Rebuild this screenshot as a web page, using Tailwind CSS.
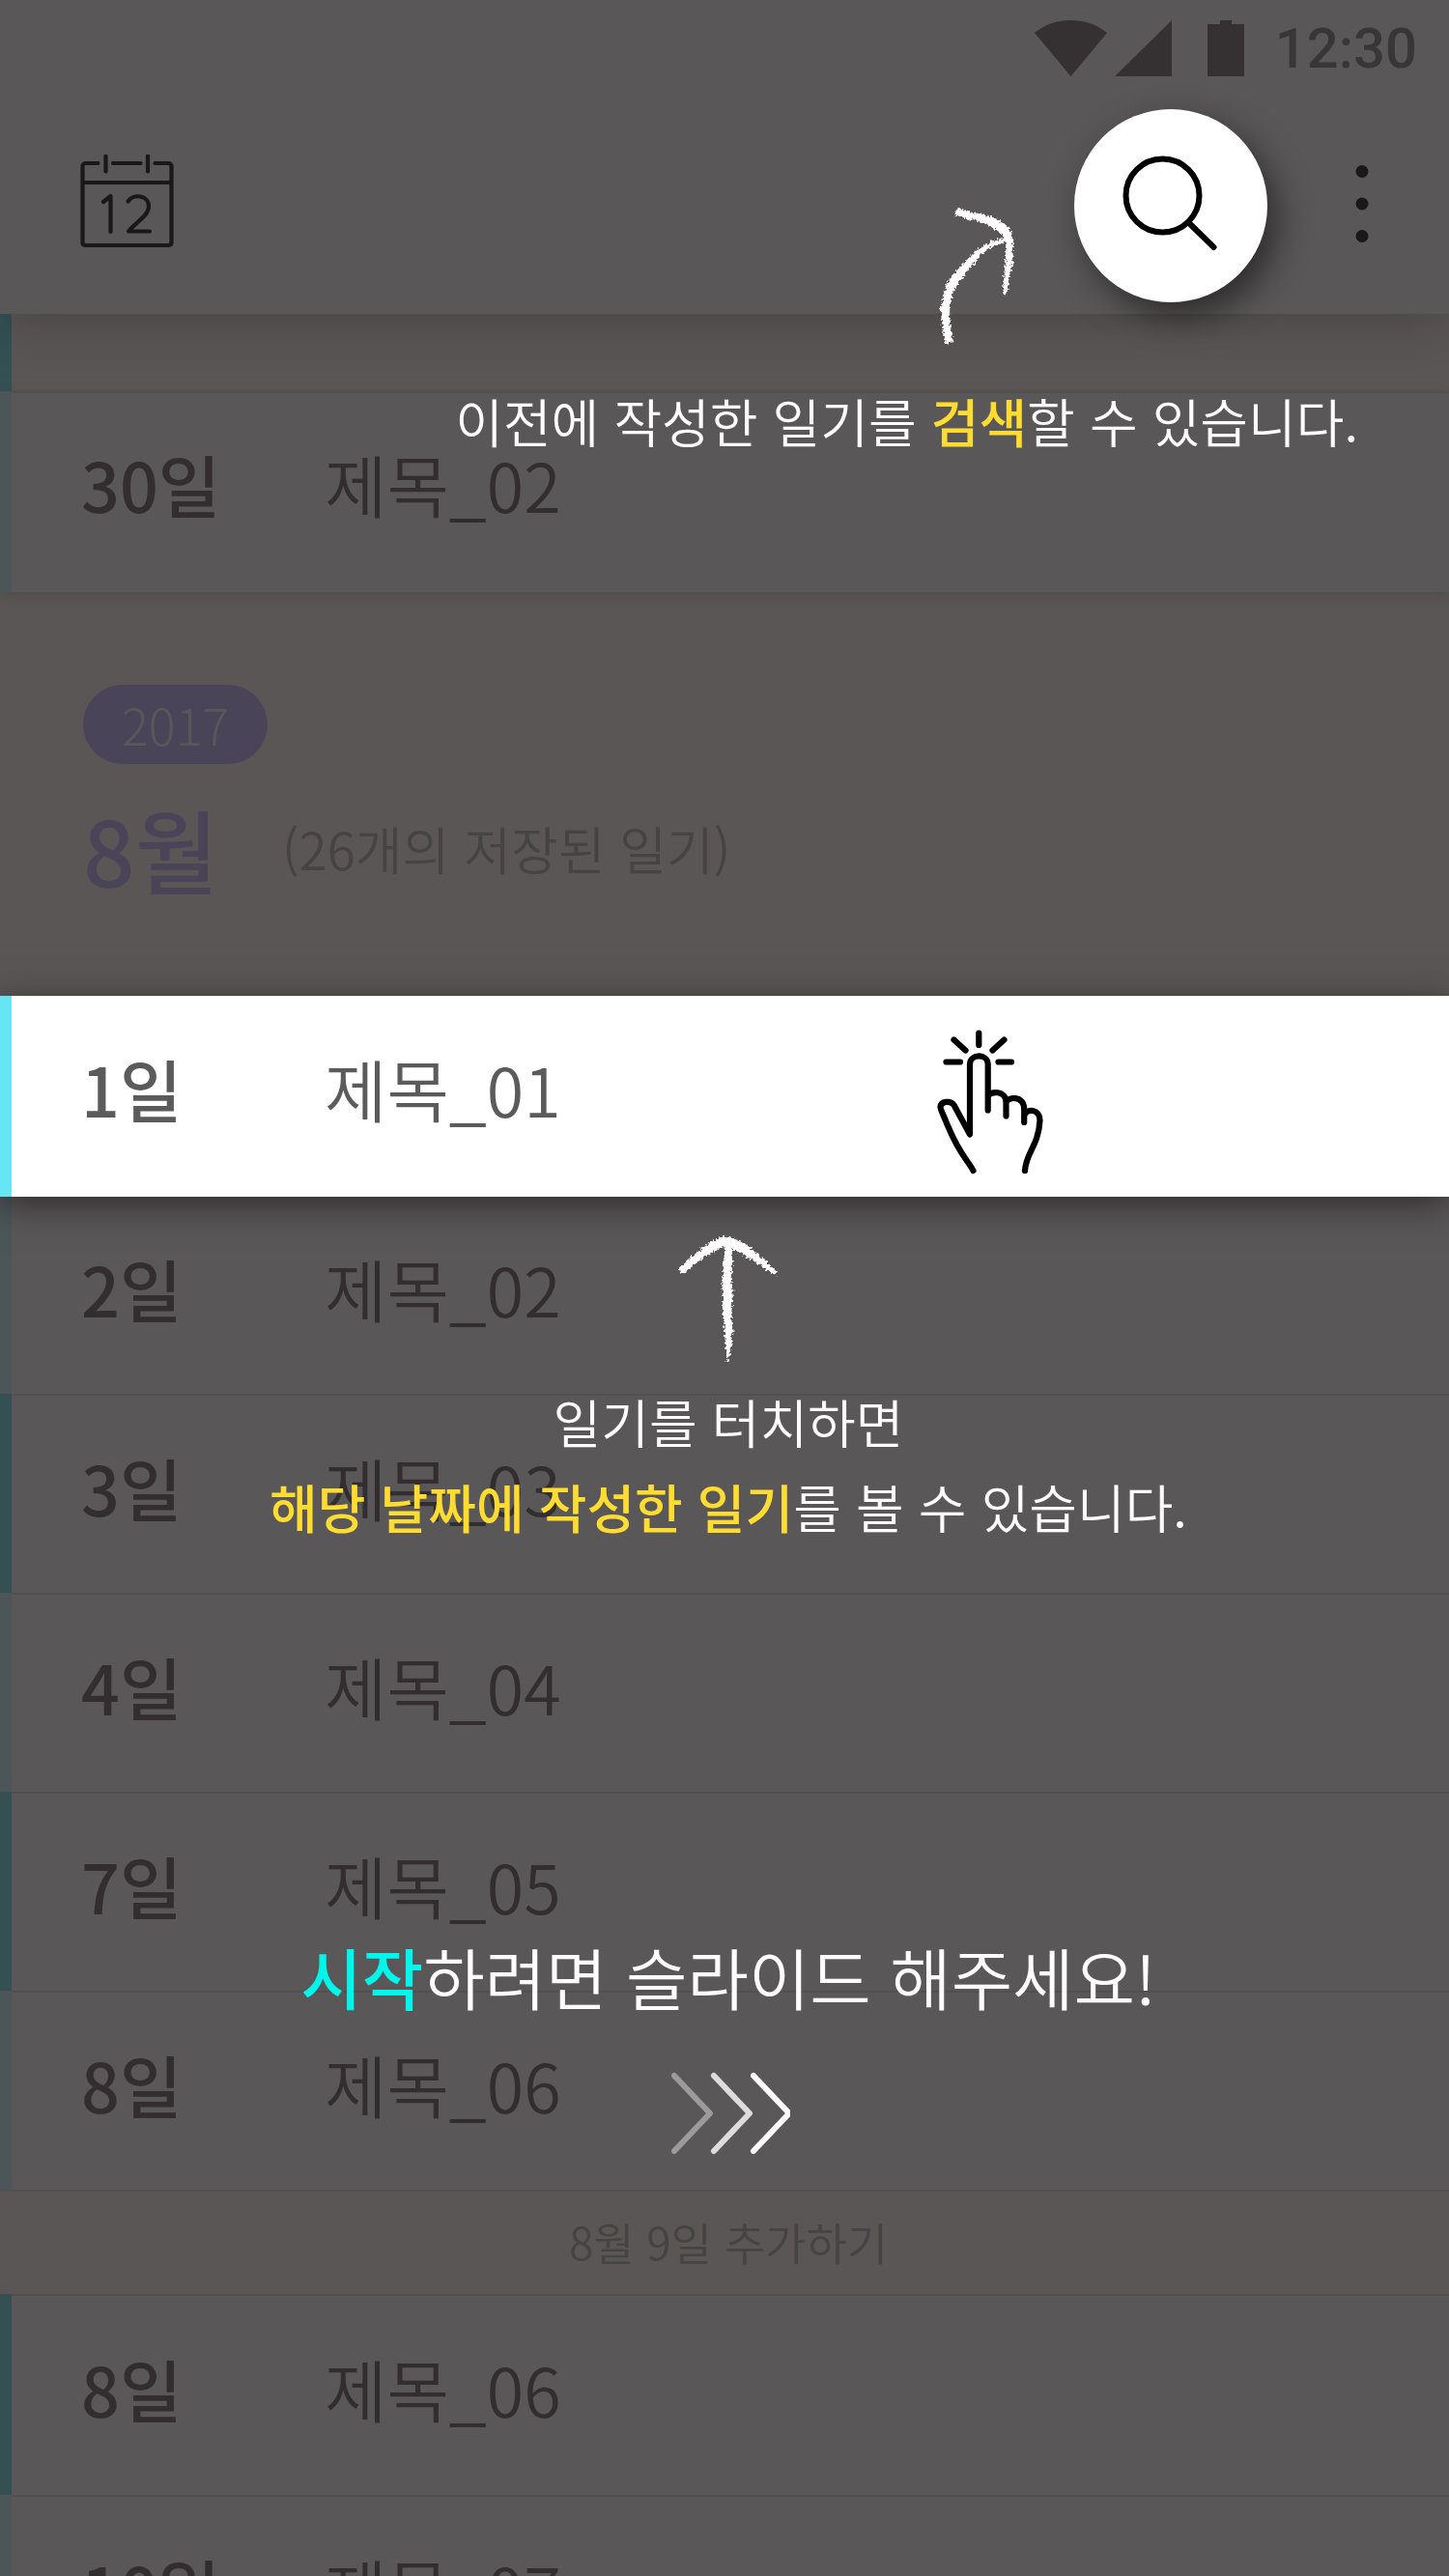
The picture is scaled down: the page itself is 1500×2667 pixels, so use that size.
<!DOCTYPE html>
<html lang="ko">
<head>
<meta charset="utf-8">
<meta name="viewport" content="width=device-width, initial-scale=1">
<title>일기 목록</title>
<script src="https://cdn.jsdelivr.net/npm/@tailwindcss/browser@4"></script>
</head>
<body class="font-['Noto_Sans_CJK_KR',sans-serif]">
<div class="relative flex h-screen flex-col overflow-hidden bg-[#5a5656] text-[#322e2f]">

  <header class="relative z-10 shrink-0 bg-[#5a5758] shadow-[0_8px_48px_rgba(0,0,0,0.2)]">
    <!-- status bar -->
    <div class="flex h-[100px] items-center justify-end pr-[33px] text-[#353132]">
      <svg class="h-[58px] w-[75px]" viewBox="0 0 75 58" fill="currentColor" aria-hidden="true"><path d="M37.500 58 0 13Q16 0 37.500 0T75 13Z"/></svg>
      <svg class="ml-2 h-[58px] w-[59px]" viewBox="0 0 59 58" fill="currentColor" aria-hidden="true"><path d="M59 0V58H0Z"/></svg>
      <svg class="ml-[37px] h-[58px] w-[38px]" viewBox="0 0 38 58" fill="currentColor" aria-hidden="true"><path d="M13 0H25V4H38V58H0V4H13Z"/></svg>
      <time class="ml-8 font-[Roboto,sans-serif] text-[58px] leading-none font-medium text-[#393637]">12:30</time>
    </div>
    <!-- toolbar -->
    <div class="flex h-[225px] items-center justify-between pr-[60px] pl-[83px] text-[#1a1819]">
      <button type="button" aria-label="달력" class="mb-2 h-[98px] w-[98px]">
        <svg class="h-full w-full" viewBox="0 0 98 98" fill="none" stroke="currentColor" stroke-width="4.200" stroke-linecap="round" stroke-linejoin="round">
          <path d="M18.500 9H6Q2.500 9 2.500 12.500V91Q2.500 94 6 94H91Q94.500 94 94.500 91V12.500Q94.500 9 91 9H77.500M34 9H62.500M26.500 1.500V17.500M70 1.500V17.500M3 29H94"/>
          <path d="M24 49 31.500 43V80M49.500 48.500C55 40 71 42 71 53.500C71 63 59 69 50 79.500H72"/>
        </svg>
      </button>
      <div class="flex items-center gap-[68px]">
        <button type="button" aria-label="검색" class="grid size-[200px] place-items-center rounded-full bg-white text-black shadow-[10px_14px_34px_rgba(0,0,0,0.5)]">
          <svg class="size-[100px] overflow-visible" viewBox="0 0 100 100" fill="none" stroke="currentColor" stroke-width="6" stroke-linecap="round"><circle cx="41.500" cy="39.500" r="38"/><path d="M69 68 94.500 93"/></svg>
        </button>
        <button type="button" aria-label="더보기" class="mb-1 h-20 w-[60px]">
          <svg class="h-full w-full" viewBox="0 0 60 80" fill="currentColor"><circle cx="30" cy="6.500" r="6.500"/><circle cx="30" cy="40" r="6.500"/><circle cx="30" cy="73.500" r="6.500"/></svg>
        </button>
      </div>
    </div>
  </header>

  <main class="min-h-0 flex-1 overflow-hidden text-[70px] leading-none">
    <div class="h-20 border-l-12 border-[#345053]"></div>
    <a href="#" class="relative flex h-[208px] items-center border-l-12 border-[#4c5659] bg-[#5a5758] pb-4 shadow-[0_4px_12px_rgba(0,0,0,0.12)]">
      <span class="absolute inset-x-0 top-0 h-[2px] bg-[#524f4f]"></span>
      <span class="w-[252px] pl-[72px] font-medium whitespace-nowrap">30일</span><span class="pl-[72px] font-[350]">제목_02</span>
    </a>

    <section class="flex h-[418px] flex-col items-start pt-[96px] pl-[86px]">
      <span class="flex h-[82px] items-center rounded-full bg-[#4a4459] px-[40px] text-[52px] font-light text-[#5a5758]">2017</span>
      <div class="mt-10 flex items-center">
        <h2 class="text-[94px] leading-[94px] font-medium text-[#4a4459]">8월</h2>
        <p class="ml-[66px] text-[53px] font-[350] text-[#464344]">(26개의 저장된 일기)</p>
      </div>
    </section>

    <div class="h-[206px]">
      <a href="#" class="relative z-10 flex h-[208px] items-center border-l-12 border-[#66e6f4] bg-white pb-4 text-[#5b5b5b] shadow-[0_8px_34px_rgba(0,0,0,0.5)]">
        <span class="w-[252px] pl-[72px] font-medium whitespace-nowrap">1일</span><span class="pl-[72px] font-[350]">제목_01</span>
        <svg class="absolute inset-y-0 left-[958px] h-[208px] w-[112px] text-black" viewBox="970 1031 112 208" fill="none" stroke="currentColor" stroke-width="6.200" stroke-linecap="round" stroke-linejoin="round" aria-hidden="true">
          <path d="M1013.300 1069.500V1082M987.500 1076.500 999.500 1087.500M1039.500 1076.500 1027.500 1087.500M979.500 1099.500H994M1033.500 1099.500H1047"/>
          <path d="M1007.500 1212C1002 1201 994 1197 980 1163C977 1155 973.500 1149 973.500 1146C974 1140 984 1139 987.500 1144L1004 1174.500V1102C1004 1090.500 1022.700 1090.500 1022.700 1102V1149.500M1022.700 1135C1025 1129 1041.500 1129 1041.500 1141V1155.500M1041.500 1142C1043 1135 1060 1134 1060.200 1148V1162M1060.200 1155C1063 1147 1076.500 1148 1076.500 1160C1075 1187 1062 1193 1061 1212"/>
        </svg>
      </a>
    </div>
    <a href="#" class="relative flex h-[206px] items-center border-l-12 border-[#4c5659] bg-[#5a5758] pb-3">
      <span class="w-[252px] pl-[72px] font-medium whitespace-nowrap">2일</span><span class="pl-[72px] font-[350]">제목_02</span>
    </a>
    <a href="#" class="relative flex h-[206px] items-center border-l-12 border-[#345053] bg-[#5a5758] pb-3">
      <span class="absolute inset-x-0 top-0 h-[2px] bg-[#524f4f]"></span>
      <span class="w-[252px] pl-[72px] font-medium whitespace-nowrap">3일</span><span class="pl-[72px] font-[350]">제목_03</span>
    </a>
    <a href="#" class="relative flex h-[206px] items-center border-l-12 border-[#4c5659] bg-[#5a5758] pb-3">
      <span class="absolute inset-x-0 top-0 h-[2px] bg-[#524f4f]"></span>
      <span class="w-[252px] pl-[72px] font-medium whitespace-nowrap">4일</span><span class="pl-[72px] font-[350]">제목_04</span>
    </a>
    <a href="#" class="relative flex h-[206px] items-center border-l-12 border-[#345053] bg-[#5a5758] pb-3">
      <span class="absolute inset-x-0 top-0 h-[2px] bg-[#524f4f]"></span>
      <span class="w-[252px] pl-[72px] font-medium whitespace-nowrap">7일</span><span class="pl-[72px] font-[350]">제목_05</span>
    </a>
    <a href="#" class="relative flex h-[206px] items-center border-l-12 border-[#4c5659] bg-[#5a5758] pb-3">
      <span class="absolute inset-x-0 top-0 h-[2px] bg-[#524f4f]"></span>
      <span class="w-[252px] pl-[72px] font-medium whitespace-nowrap">8일</span><span class="pl-[72px] font-[350]">제목_06</span>
    </a>
    <button type="button" class="block h-[108px] w-full border-t-2 border-[#524f4f] pb-1 pl-2 text-[46px] font-[350] text-[#464344]">8월 9일 추가하기</button>
    <a href="#" class="relative flex h-[208px] items-center border-l-12 border-[#345053] bg-[#5a5758] pb-3">
      <span class="absolute inset-x-0 top-0 h-[2px] bg-[#524f4f]"></span>
      <span class="w-[252px] pl-[72px] font-medium whitespace-nowrap">8일</span><span class="pl-[72px] font-[350]">제목_06</span>
    </a>
    <a href="#" class="relative flex h-[206px] items-center border-l-12 border-[#4c5659] bg-[#5a5758] pb-3">
      <span class="absolute inset-x-0 top-0 h-[2px] bg-[#524f4f]"></span>
      <span class="w-[252px] pl-[72px] font-medium whitespace-nowrap">10일</span><span class="pl-[72px] font-[350]">제목_07</span>
    </a>
  </main>

  <!-- coach marks -->
  <div class="pointer-events-none absolute inset-0 z-20 text-[54px] leading-[88px] font-[350] text-white">
    <svg class="absolute top-[190px] right-[390px] h-[180px] w-40" viewBox="0 0 480 540" fill="currentColor" aria-hidden="true">
      <defs><filter id="chalk" x="-10%" y="-10%" width="120%" height="120%"><feTurbulence type="fractalNoise" baseFrequency="0.120" numOctaves="3" seed="4"/><feDisplacementMap in="SourceGraphic" scale="20" xChannelSelector="R" yChannelSelector="G"/></filter></defs>
      <g filter="url(#chalk)" stroke="currentColor" stroke-width="3">
        <path d="M122 77C150 90 180 93 205 97C240 107 270 122 286 142C300 175 297 240 283 290C279 320 277 345 267 343C264 320 272 280 274 240C275 210 277 185 268 163C245 140 220 128 190 115C165 112 140 105 115 95Z"/>
        <path d="M274 171C240 175 215 188 190 203C155 235 115 275 96 305C82 340 74 365 73 395C75 430 82 465 88 497L108 492C100 455 98 425 98 400C98 365 105 340 124 310C150 275 175 245 200 217C225 197 250 186 274 180Z"/>
      </g>
    </svg>
    <p class="absolute top-[392px] right-[94px] whitespace-nowrap">이전에 작성한 일기를 <strong class="font-medium text-[#ffdc32]">검색</strong>할 수 있습니다.</p>

    <div class="absolute inset-x-0 top-[1260px] flex flex-col items-center pl-2 text-center">
      <svg class="h-40 w-[130px]" viewBox="0 0 390 480" fill="currentColor" aria-hidden="true">
        <g filter="url(#chalk)" stroke="currentColor" stroke-width="3">
          <path d="M42 162C80 125 130 78 183 60C240 70 290 115 345 172L340 180C300 150 250 120 205 95C207 150 202 190 207 235C208 270 198 300 207 345C206 390 200 425 191 448C185 400 188 370 182 330C174 290 182 250 176 215C182 170 180 130 187 90C140 105 95 140 54 177Z"/>
        </g>
      </svg>
      <p class="mt-2">일기를 터치하면<br><strong class="font-medium text-[#ffdc32]">해당 날짜에 작성한 일기</strong>를 볼 수 있습니다.</p>
    </div>

    <div class="absolute inset-x-0 top-[2002px] flex flex-col items-center pl-2">
      <p class="text-[69px]"><strong class="font-medium text-[#00f5eb]">시작</strong>하려면 슬라이드 해주세요!</p>
      <svg class="mt-[54px] h-[88px] w-32" viewBox="690 2144 128 88" fill="none" stroke="currentColor" stroke-width="6" stroke-linecap="round" stroke-linejoin="round" aria-hidden="true">
        <path d="M698 2149 735 2188 698 2227" stroke="#9c9a9a"/><path d="M739 2149 776 2188 739 2227" stroke="#dedddd"/><path d="M780 2149 817 2188 780 2227"/>
      </svg>
    </div>
  </div>
</div>
</body>
</html>
